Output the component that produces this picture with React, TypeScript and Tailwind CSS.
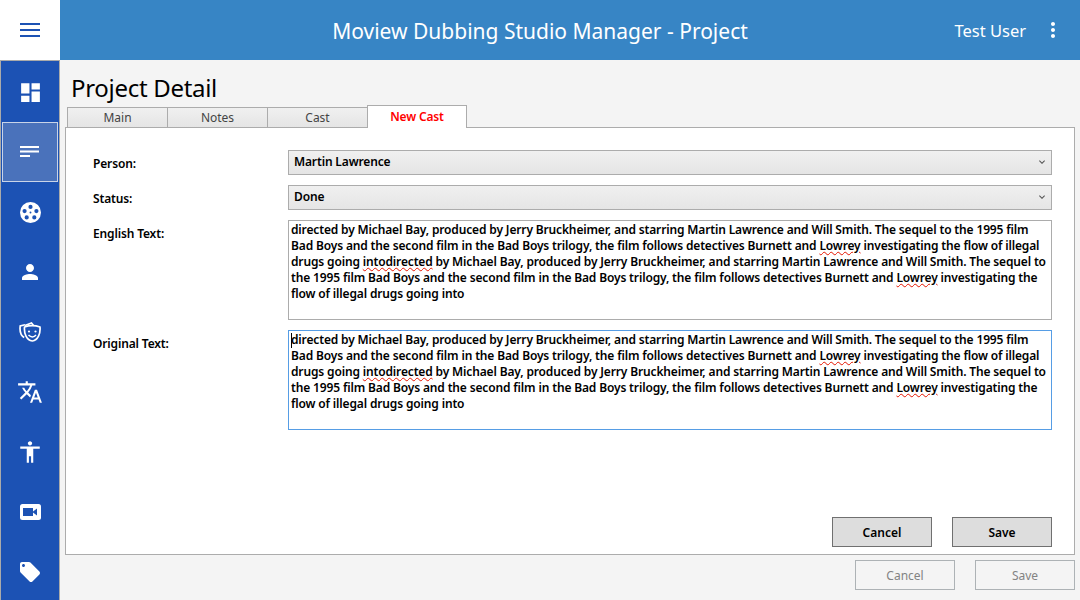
import { MdDashboard, MdPerson, MdTranslate, MdAccessibility, MdLocalOffer, MdMoreVert, MdKeyboardArrowDown } from "react-icons/md";
import type { ReactNode } from "react";

const ui = "font-['Noto_Sans','Open_Sans',sans-serif]";

function Reel() {
  return (
    <svg viewBox="0 0 22 22" className="h-[21px] w-[21px]" fill="#fff">
      <path
        fillRule="evenodd"
        d="M11 0a11 11 0 1 0 0 22a11 11 0 0 0 0-22zM11 3a2.200 2.200 0 1 1 0 4.400a2.200 2.200 0 0 1 0-4.400zM4.800 7.300a2.200 2.200 0 1 1 0 4.400a2.200 2.200 0 0 1 0-4.400zM17.200 7.300a2.200 2.200 0 1 1 0 4.400a2.200 2.200 0 0 1 0-4.400zM7 14a2.200 2.200 0 1 1 0 4.400a2.200 2.200 0 0 1 0-4.400zM15 14a2.200 2.200 0 1 1 0 4.400a2.200 2.200 0 0 1 0-4.400zM11 10a1 1 0 1 0 0 2a1 1 0 0 0 0-2z"
      />
    </svg>
  );
}

function Masks() {
  return (
    <svg viewBox="0 0 22 20" className="h-[20px] w-[22px]" fill="none" stroke="#fff" strokeWidth="1.700">
      <path d="M6 2.800L1.200 4c-.6 5 .5 9.500 4 11.500" />
      <path d="M6 3.500L12.500 1l2 2.500" />
      <path d="M5.500 5c5-1.800 10.500-1.800 15.500 0c.6 6.500-2 13-7.700 14c-5.800-1-8.400-7.500-7.800-14z" />
      <circle cx="10" cy="9.500" r="1.100" fill="#fff" stroke="none" />
      <circle cx="16.500" cy="9.500" r="1.100" fill="#fff" stroke="none" />
      <path d="M9.500 13c2.500 2.500 5.500 2.500 7.500 0" strokeWidth="1.500" />
    </svg>
  );
}

function Camera() {
  return (
    <svg viewBox="0 0 21 16" className="h-[16px] w-[21px]">
      <rect width="21" height="16" rx="2.500" fill="#fff" />
      <path d="M3 4h10v8H3zM13 7.500l4-3v7l-4-3z" fill="#1c52b4" />
    </svg>
  );
}

function SideItem({ children, active }: { children: ReactNode; active?: boolean }) {
  return (
    <div
      className={
        active
          ? "flex h-[60px] shrink-0 items-center justify-center border border-[#c9d4e8] bg-[#4a72bb]"
          : "flex h-[60px] shrink-0 items-center justify-center"
      }
    >
      {children}
    </div>
  );
}

function Tab({ label, active }: { label: string; active?: boolean }) {
  if (active) {
    return (
      <div className="relative z-10 -mb-px flex h-[23px] w-[100px] items-center justify-center border border-b-0 border-[#acacac] bg-white text-[12px] font-semibold tracking-[-0.15px] text-[#ff0000]">
        {label}
      </div>
    );
  }
  return (
    <div className="flex h-[20px] w-[100px] items-center justify-center border border-r-0 border-b-0 border-[#acacac] bg-gradient-to-b from-[#f0f0f0] to-[#e5e5e5] text-[12px] text-[#444]">
      {label}
    </div>
  );
}

function Select({ value }: { value: string }) {
  return (
    <div className="flex h-[25px] items-center justify-between border border-[#acacac] bg-gradient-to-b from-[#f0f0f0] to-[#e5e5e5] pr-[3px] pb-[2px] pl-[5px] text-[12px] font-semibold tracking-[-0.15px] text-black">
      <span>{value}</span>
      <MdKeyboardArrowDown className="text-[#555]" size={12} />
    </div>
  );
}

function Bad({ children }: { children: ReactNode }) {
  return <span className="underline decoration-[#e51400] decoration-wavy decoration-1">{children}</span>;
}

function Lines() {
  return (
    <div className="text-[12px] leading-[16px] font-semibold tracking-[-0.15px] whitespace-nowrap text-black">
      <div>directed by Michael Bay, produced by Jerry Bruckheimer, and starring Martin Lawrence and Will Smith. The sequel to the 1995 film</div>
      <div>
        Bad Boys and the second film in the Bad Boys trilogy, the film follows detectives Burnett and <Bad>Lowrey</Bad> investigating the flow of illegal
      </div>
      <div>
        drugs going <Bad>intodirected</Bad> by Michael Bay, produced by Jerry Bruckheimer, and starring Martin Lawrence and Will Smith. The sequel to
      </div>
      <div>
        the 1995 film Bad Boys and the second film in the Bad Boys trilogy, the film follows detectives Burnett and <Bad>Lowrey</Bad> investigating the
      </div>
      <div>flow of illegal drugs going into</div>
    </div>
  );
}

function Row({ label, gap, children }: { label: string; gap: string; children: ReactNode }) {
  return (
    <div className={`flex ${gap}`}>
      <div className="w-[195px] pt-[6px] text-[12px] leading-[16px] font-semibold tracking-[-0.15px] text-black">{label}</div>
      <div className="w-[764px]">{children}</div>
    </div>
  );
}

export default function App() {
  return (
    <div className={`${ui} flex h-[600px] w-[1080px] flex-col overflow-hidden bg-[#f4f4f4]`}>
      <header className="flex h-[60px] shrink-0">
        <div className="flex w-[60px] items-center justify-center bg-white">
          <svg viewBox="0 0 20 14" className="h-[14px] w-[20px]" stroke="#1c52b4" strokeWidth="2">
            <path d="M0 1h20M0 7h20M0 13h20" />
          </svg>
        </div>
        <div className="relative flex flex-1 items-center justify-center bg-[#3785c5] pt-[3px] pr-[60px] text-[21px] text-white">
          <span>Moview Dubbing Studio Manager - Project</span>
          <span className="absolute right-[54px] text-[16.500px]">Test User</span>
          <MdMoreVert className="absolute right-[15px] mt-[-3px]" size={24} />
        </div>
      </header>

      <div className="flex min-h-0 flex-1">
        <nav className="flex w-[60px] shrink-0 flex-col overflow-hidden border border-b-0 border-[#aaaaaa] bg-[#1c52b4] pt-px pr-px pl-px text-white">
          <SideItem><MdDashboard size={25} /></SideItem>
          <SideItem active>
            <svg viewBox="0 0 20 12" className="h-[12px] w-[20px]" fill="#fff">
              <path d="M0 0h19v2H0zM0 4.500h19v2H0zM0 9h10v2H0z" />
            </svg>
          </SideItem>
          <SideItem><Reel /></SideItem>
          <SideItem><MdPerson size={24} /></SideItem>
          <SideItem><Masks /></SideItem>
          <SideItem><MdTranslate size={26} /></SideItem>
          <SideItem><MdAccessibility size={26} /></SideItem>
          <SideItem><Camera /></SideItem>
          <SideItem><MdLocalOffer size={24} /></SideItem>
        </nav>

        <main className="flex min-w-0 flex-1 flex-col pt-[11px] pr-[5px] pl-[5px]">
          <h1 className="mb-px pl-[6px] text-[24px] leading-[33px] font-normal tracking-[-0.3px] text-black">Project Detail</h1>
          <div className="flex items-end pl-[2px] leading-none">
            <Tab label="Main" />
            <Tab label="Notes" />
            <Tab label="Cast" />
            <Tab label="New Cast" active />
          </div>
          <section className="flex h-[428px] flex-col border border-[#acacac] bg-white pt-[22px] pr-[22px] pl-[27px]">
            <Row label="Person:" gap="mb-[10px]"><Select value="Martin Lawrence" /></Row>
            <Row label="Status:" gap="mb-[10px]"><Select value="Done" /></Row>
            <Row label="English Text:" gap="mb-[10px]">
              <div className="h-[100px] border border-[#acacac] bg-white px-[2px] pt-px"><Lines /></div>
            </Row>
            <Row label="Original Text:" gap="">
              <div className="relative h-[100px] border border-[#569de5] bg-white px-[2px] pt-px">
                <span className="absolute top-[2px] left-[2px] h-[15px] w-px bg-black" />
                <Lines />
              </div>
            </Row>
            <div className="mt-[87px] flex justify-end gap-[20px]">
              <button className="h-[30px] w-[100px] border border-[#707070] bg-[#dddddd] pt-px text-[12px] font-semibold text-black">Cancel</button>
              <button className="h-[30px] w-[100px] border border-[#707070] bg-[#dddddd] pt-px text-[12px] font-semibold text-black">Save</button>
            </div>
          </section>
          <div className="mt-[5px] flex justify-end gap-[20px]">
            <button className="h-[30px] w-[100px] border border-[#adb2b5] bg-[#f4f4f4] pt-px text-[12px] text-[#838383]">Cancel</button>
            <button className="h-[30px] w-[100px] border border-[#adb2b5] bg-[#f4f4f4] pt-px text-[12px] text-[#838383]">Save</button>
          </div>
        </main>
      </div>
    </div>
  );
}
